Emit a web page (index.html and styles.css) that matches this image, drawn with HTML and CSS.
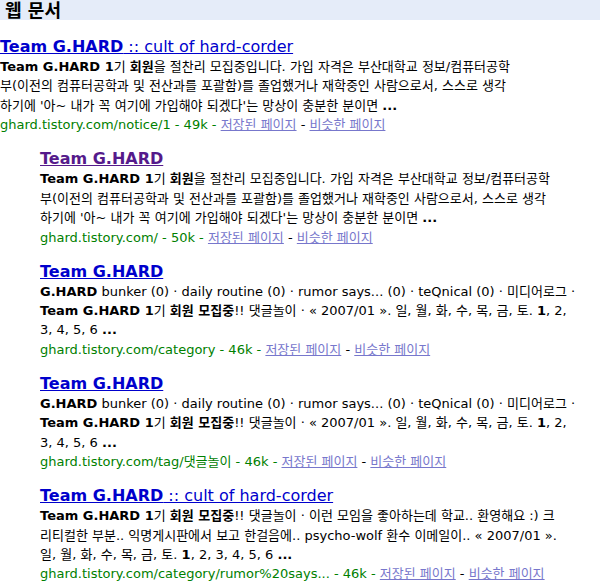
FILE: index.html
```html
<!DOCTYPE html>
<html lang="ko">
<head>
  <meta charset="UTF-8">
  <title>웹 문서</title>
  <link rel="stylesheet" href="styles.css">
</head>
<body>

  <div class="bar">웹 문서</div>

  <ol class="results">
    <li class="result">
      <h3 class="title"><a href="#"><b>Team G.HARD</b> :: cult of hard-corder</a></h3>
      <div class="snippet">
        <b>Team G.HARD 1</b>기 <b>회원</b>을 절찬리 모집중입니다. 가입 자격은 부산대학교 정보/컴퓨터공학<br>
        부(이전의 컴퓨터공학과 및 전산과를 포괄함)를 졸업했거나 재학중인 사람으로서, 스스로 생각<br>
        하기에 '아~ 내가 꼭 여기에 가입해야 되겠다'는 망상이 충분한 분이면 <b>...</b>
      </div>
      <div class="meta">
        <span class="url">ghard.tistory.com/notice/1 - 49k - </span><a class="fl" href="#">저장된 페이지</a> - <a class="fl" href="#">비슷한 페이지</a>
      </div>
    </li>

    <li class="result sub">
      <h3 class="title"><a class="visited" href="#"><b>Team G.HARD</b></a></h3>
      <div class="snippet">
        <b>Team G.HARD 1</b>기 <b>회원</b>을 절찬리 모집중입니다. 가입 자격은 부산대학교 정보/컴퓨터공학<br>
        부(이전의 컴퓨터공학과 및 전산과를 포괄함)를 졸업했거나 재학중인 사람으로서, 스스로 생각<br>
        하기에 '아~ 내가 꼭 여기에 가입해야 되겠다'는 망상이 충분한 분이면 <b>...</b>
      </div>
      <div class="meta">
        <span class="url">ghard.tistory.com/ - 50k - </span><a class="fl" href="#">저장된 페이지</a> - <a class="fl" href="#">비슷한 페이지</a>
      </div>
    </li>

    <li class="result sub">
      <h3 class="title"><a href="#"><b>Team G.HARD</b></a></h3>
      <div class="snippet">
        <b>G.HARD</b> bunker (0) · daily routine (0) · rumor says... (0) · teQnical (0) · 미디어로그 ·<br>
        <b>Team G.HARD 1</b>기 <b>회원 모집중</b>!! 댓글놀이 · « 2007/01 ». 일, 월, 화, 수, 목, 금, 토. <b>1</b>, 2,<br>
        3, 4, 5, 6 <b>...</b>
      </div>
      <div class="meta">
        <span class="url">ghard.tistory.com/category - 46k - </span><a class="fl" href="#">저장된 페이지</a> - <a class="fl" href="#">비슷한 페이지</a>
      </div>
    </li>

    <li class="result sub">
      <h3 class="title"><a href="#"><b>Team G.HARD</b></a></h3>
      <div class="snippet">
        <b>G.HARD</b> bunker (0) · daily routine (0) · rumor says... (0) · teQnical (0) · 미디어로그 ·<br>
        <b>Team G.HARD 1</b>기 <b>회원 모집중</b>!! 댓글놀이 · « 2007/01 ». 일, 월, 화, 수, 목, 금, 토. <b>1</b>, 2,<br>
        3, 4, 5, 6 <b>...</b>
      </div>
      <div class="meta">
        <span class="url">ghard.tistory.com/tag/댓글놀이 - 46k - </span><a class="fl" href="#">저장된 페이지</a> - <a class="fl" href="#">비슷한 페이지</a>
      </div>
    </li>

    <li class="result sub">
      <h3 class="title"><a href="#"><b>Team G.HARD</b> :: cult of hard-corder</a></h3>
      <div class="snippet">
        <b>Team G.HARD 1</b>기 <b>회원 모집중</b>!! 댓글놀이 · 이런 모임을 좋아하는데 학교.. 환영해요 :) 크<br>
        리티컬한 부분.. 익명게시판에서 보고 한걸음에.. psycho-wolf 환수 이메일이.. « 2007/01 ».<br>
        일, 월, 화, 수, 목, 금, 토. <b>1</b>, 2, 3, 4, 5, 6 <b>...</b>
      </div>
      <div class="meta">
        <span class="url">ghard.tistory.com/category/rumor%20says... - 46k - </span><a class="fl" href="#">저장된 페이지</a> - <a class="fl" href="#">비슷한 페이지</a>
      </div>
    </li>
  </ol>

</body>
</html>
```

FILE: styles.css
```css
body {
  margin: 0;
  font-family: "DejaVu Sans", "Noto Sans CJK KR", sans-serif;
  color: #000;
  background: #fff;
}

.bar {
  height: 20px;
  padding-left: 5px;
  font-size: 18px;
  line-height: 21px;
  font-weight: 700;
  background: #e5ecf9;
}

.results {
  margin: 0;
  padding: 17px 0 0;
  list-style: none;
}

.result {
  margin-bottom: 14.7px;
}

  .result.sub {
    margin-left: 40px;
  }

.title {
  margin: 0;
  font-size: 16px;
  font-weight: 400;
  line-height: 20px;
  white-space: nowrap;
}

  .title a {
    color: #00c;
  }

  .title a.visited {
    color: #551a8b;
  }

.snippet,
.meta {
  font-size: 13px;
  line-height: 19.4px;
  white-space: nowrap;
}

.url {
  color: #008000;
}

.fl {
  color: #77c;
}
```
